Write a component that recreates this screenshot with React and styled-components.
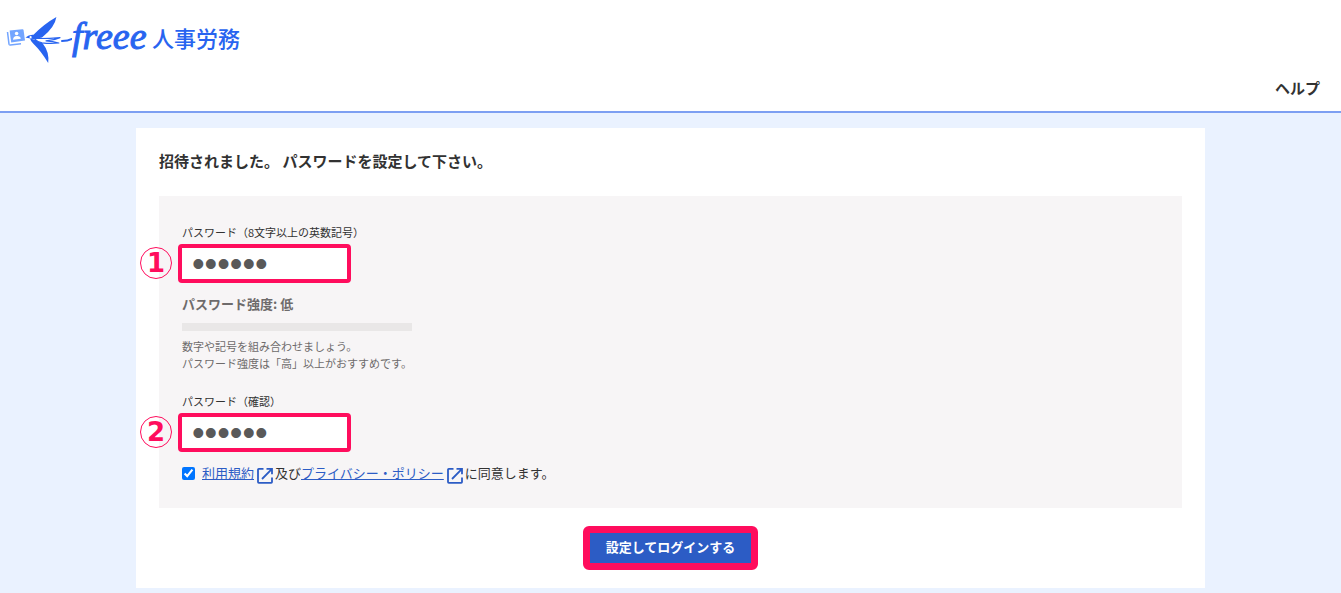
import { useState } from 'react';
import styled, { createGlobalStyle } from 'styled-components';

const GlobalStyle = createGlobalStyle`
  * {
    box-sizing: border-box;
  }
  body {
    margin: 0;
    background: #eaf2ff;
    color: #323232;
    font-family: "Noto Sans CJK JP", sans-serif;
    font-size: 13px;
  }
`

const BirdMark = () => (
  <svg width="72" height="48" viewBox="0 0 72 48" aria-hidden="true">
    <path d="M7.5 16 L9 28.2 Q9.2 29.2 10.4 29 L21 27.8" fill="none" stroke="#73a5ff" strokeWidth="1.5" />
    <path d="M9.6 14.6 L22.4 13.2 Q23.4 13.1 23.6 14.2 L25 24.6 L11.2 26.6 Z" fill="#73a5ff" />
    <circle cx="16.6" cy="17.5" r="1.8" fill="#fff" />
    <path d="M13 23.8 Q13.2 20.3 16.8 20 Q20.4 19.8 20.8 22.8 Z" fill="#fff" />
    <g fill="#2864f0">
      <path d="M25.5 21.6 Q29 18.4 33.5 18.8 Q44 8 56.4 1 Q55 11 42 21.6 L34 23.2 Z" />
      <path d="M30 22.5 L36 24 Q39 26.6 42.6 27.2 Q49.6 36 48.2 47 Q41 35 33.6 28 Q30.6 25.4 30 22.5 Z" />
    </g>
    <path
      d="M34 22.4 Q46 22.8 60 21.6 Q54 24.4 46 24.8 Q53 25 58.8 27 Q50 28 42 26.8 Q37 25.8 34 22.4 Z"
      fill="#fff"
      stroke="#2864f0"
      strokeWidth="1.2"
      strokeLinejoin="round"
    />
    <circle cx="30.6" cy="21.2" r="1.1" fill="#fff" />
    <path d="M62 25 Q68 25 72 23" fill="none" stroke="#2864f0" strokeWidth="2" strokeLinecap="round" />
  </svg>
)

const ExternalIcon = () => (
  <svg width="16" height="17" viewBox="0 0 16 17" fill="none" stroke="currentColor" strokeWidth="1.8" aria-hidden="true">
    <path d="M6.5 1.8 H1.8 Q1 1.8 1 2.6 V15 Q1 15.8 1.8 15.8 H14.2 Q15 15.8 15 15 V10.5" />
    <path d="M9.5 1.8 H15 V7.3 M15 1.8 L5 12" />
  </svg>
)

const PasswordField = ({ id, number, label, value, onChange }) => (
  <Field>
    <Label htmlFor={id}>{label}</Label>
    <InputFrame>
      <Step>{number}</Step>
      <PasswordInput id={id} type="password" value={value} onChange={(e) => onChange(e.target.value)} />
    </InputFrame>
  </Field>
)

const App = () => {
  const [password, setPassword] = useState('abcdef');
  const [confirm, setConfirm] = useState('abcdef');
  const [agreed, setAgreed] = useState(true);

  return <>
    <GlobalStyle />
    <Header>
      <Logo href="#">
        <BirdMark />
        <Brand>freee</Brand>
        <Product>人事労務</Product>
      </Logo>
      <HelpLink href="#">ヘルプ</HelpLink>
    </Header>
    <Main>
      <Title>招待されました。 パスワードを設定して下さい。</Title>
      <form onSubmit={(e) => e.preventDefault()}>
        <Panel>
          <PasswordField
            id="password"
            number="1"
            label="パスワード（8文字以上の英数記号）"
            value={password}
            onChange={setPassword}
          />
          <Strength>パスワード強度: 低</Strength>
          <StrengthBar />
          <Hint>
            数字や記号を組み合わせましょう。<br />
            パスワード強度は「高」以上がおすすめです。
          </Hint>
          <PasswordField
            id="confirm"
            number="2"
            label="パスワード（確認）"
            value={confirm}
            onChange={setConfirm}
          />
          <Agreement>
            <Checkbox id="agree" type="checkbox" checked={agreed} onChange={(e) => setAgreed(e.target.checked)} />
            <label htmlFor="agree">
              <TextLink href="#">利用規約</TextLink>
              <IconLink href="#" aria-label="利用規約"><ExternalIcon /></IconLink>
              及び
              <TextLink href="#">プライバシー・ポリシー</TextLink>
              <IconLink href="#" aria-label="プライバシー・ポリシー"><ExternalIcon /></IconLink>
              に同意します。
            </label>
          </Agreement>
        </Panel>
        <SubmitButton type="submit">設定してログインする</SubmitButton>
      </form>
    </Main>
  </>
};

export default App;


const Header = styled.header`
  display: flex;
  flex-direction: column;
  align-items: flex-start;
  padding: 16px 21px 10px 0;
  background: #fff;
  border-bottom: 2px solid #7d9ff2;
`
const Logo = styled.a`
  display: flex;
  align-items: flex-start;
  height: 48px;
  color: #2864f0;
  text-decoration: none;
`
const Brand = styled.span`
  width: 80px;
  font-family: "Liberation Serif", serif;
  font-size: 38px;
  font-style: italic;
  line-height: 40px;
  -webkit-text-stroke: 1px currentColor;
`
const Product = styled.span`
  font-size: 22px;
  font-weight: 500;
  line-height: 42px;
`
const HelpLink = styled.a`
  align-self: flex-end;
  margin-top: 12px;
  margin-bottom: 1px;
  color: #323232;
  font-size: 15px;
  font-weight: 700;
  line-height: 24px;
  text-decoration: none;
`
const Main = styled.main`
  max-width: 1069px;
  margin: 15px auto 5px;
  padding: 21px 23px 18px;
  background: #fff;
`
const Title = styled.h1`
  margin: 0 0 23px;
  font-size: 15px;
  font-weight: 700;
  line-height: 24px;
`
const Panel = styled.div`
  padding: 27px 23px 24px;
  background: #f7f5f6;
`
const Field = styled.div`
  display: flex;
  flex-direction: column;
  align-items: flex-start;
`
const Label = styled.label`
  font-size: 11px;
  line-height: 18px;
`
const InputFrame = styled.div`
  position: relative;
  width: 173px;
  margin: 3px 0 0 -4px;
`
const Step = styled.span`
  position: absolute;
  top: 3px;
  left: -38px;
  width: 32px;
  height: 32px;
  border: 1px solid #ff0d5d;
  border-radius: 50%;
  color: #ff0d5d;
  font-family: "DejaVu Sans", sans-serif;
  font-size: 26px;
  font-weight: 700;
  line-height: 31px;
  text-align: center;
`
const PasswordInput = styled.input`
  display: block;
  width: 100%;
  height: 39px;
  padding: 0 10px;
  border: 4px solid #ff0d5d;
  border-radius: 4px;
  background: #fff;
  color: #595959;
  font-family: "Liberation Sans", sans-serif;
  font-size: 36px;
  outline: none;
`
const Strength = styled.p`
  margin: 10px 0 8px;
  color: #6e6b6b;
  font-weight: 700;
  line-height: 22px;
`
const StrengthBar = styled.div`
  width: 230px;
  height: 8px;
  background: #e9e7e7;
`
const Hint = styled.p`
  margin: 7px 0 20px;
  color: #6e6b6b;
  font-size: 11px;
  line-height: 17px;
`
const Agreement = styled.div`
  display: flex;
  align-items: center;
  margin-top: 10px;
  line-height: 22px;
`
const Checkbox = styled.input`
  width: 13px;
  height: 13px;
  margin: 0 7px 0 0;
  accent-color: #0075ff;
`
const TextLink = styled.a`
  color: #2c5cc5;
  text-decoration: underline;
`
const IconLink = styled.a`
  display: inline-block;
  margin: 0 2px 0 3px;
  color: #2c5cc5;
  line-height: 0;
  vertical-align: -6px;
`
const SubmitButton = styled.button`
  display: block;
  margin: 18px auto 0;
  padding: 7px 16px 9px;
  border: 7px solid #ff0d5d;
  border-radius: 6px;
  background: #2c5cc5;
  color: #fff;
  font-family: inherit;
  font-size: 13px;
  font-weight: 700;
  line-height: 14px;
`
